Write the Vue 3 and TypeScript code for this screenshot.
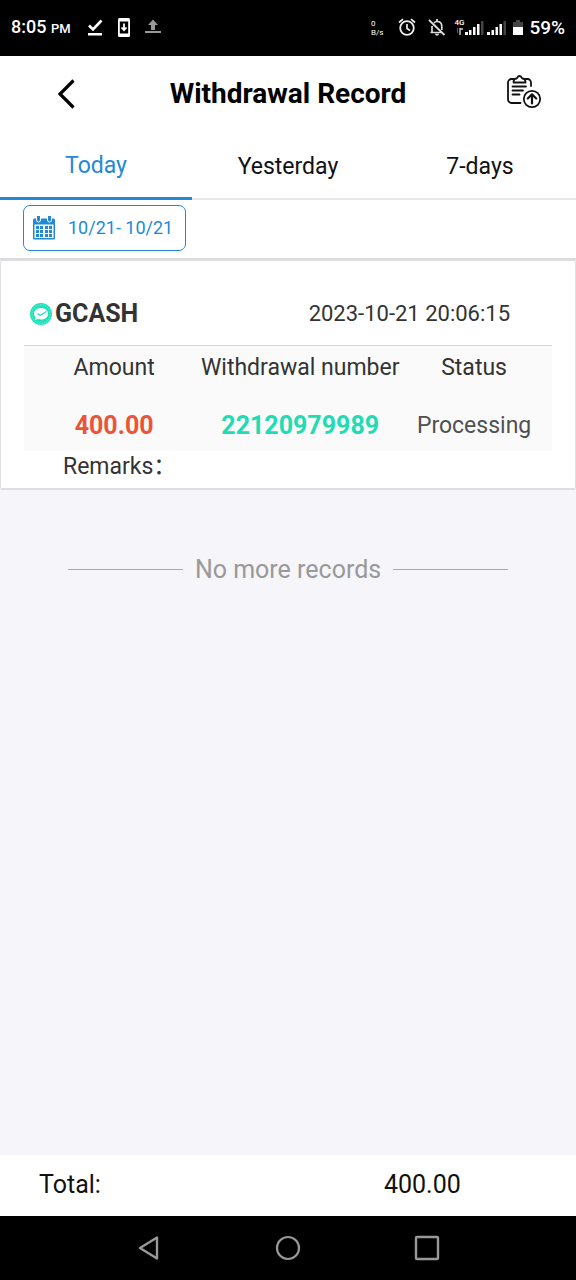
<script setup lang="ts">
import { ref } from 'vue'

interface WithdrawalRecord {
  channel: string
  time: string
  amount: string
  account: string
  status: string
}

const tabs: string[] = ['Today', 'Yesterday', '7-days']
const activeTab = ref<string>('Today')

const records: WithdrawalRecord[] = [
  {
    channel: 'GCASH',
    time: '2023-10-21 20:06:15',
    amount: '400.00',
    account: '22120979989',
    status: 'Processing',
  },
]

const calendarRows: number[] = [10, 14, 18]
const calendarCols: number[] = [3, 7, 12, 16]
</script>

<template>
  <div class="screen">
    <div class="status-bar">
      <div class="status-left">
        <span class="clock">8:05 <small>PM</small></span>
        <svg class="ic-check" width="18" height="20" viewBox="0 0 18 20">
          <path d="M3 7.5l4 4 8.500-9" fill="none" stroke="#fff" stroke-width="2.600" />
          <rect x="2" y="15" width="14" height="2.500" fill="#fff" />
        </svg>
        <svg class="ic-phone" width="14" height="20" viewBox="0 0 14 20">
          <rect x="1" y="0" width="12" height="19" rx="1.500" fill="#fff" />
          <rect x="2.800" y="3.500" width="8.400" height="12" fill="#000" />
          <path d="M7 5.500v6M4.500 9.500L7 12.200 9.500 9.500" fill="none" stroke="#fff" stroke-width="1.800" />
        </svg>
        <svg class="ic-upload" width="18" height="20" viewBox="0 0 18 20">
          <path d="M9 1.500l5 5.500h-3v5H7V7H4z" fill="#999" />
          <rect x="1" y="13" width="16" height="2" fill="#999" />
        </svg>
      </div>
      <div class="status-right">
        <span class="speed"><span>0</span><span>B/s</span></span>
        <svg class="ic-alarm" width="18" height="20" viewBox="0 0 18 20">
          <circle cx="9" cy="10" r="6.800" fill="none" stroke="#eee" stroke-width="1.800" />
          <path d="M9 6v4.500l3 2M1 4.500L5 1.200M17 4.500l-4-3.300" fill="none" stroke="#eee" stroke-width="1.700" />
        </svg>
        <svg class="ic-bell" width="18" height="20" viewBox="0 0 18 20">
          <path d="M4 14.500V8M6 4.800c1-1 2-1.300 3-1.300 3 0 4.800 2 4.800 5v3.500M2.500 14.500H13" fill="none" stroke="#ddd" stroke-width="1.700" />
          <path d="M9 1v2.500M1 2l15.500 15" stroke="#ddd" stroke-width="1.800" />
          <path d="M7 15.800h4a2 2 0 0 1-4 0z" fill="#ddd" />
        </svg>
        <span class="signal">
          <span class="net">4G</span>
          <svg width="30" height="18" viewBox="0 0 30 18">
            <path d="M6 9v7M6 10h3" fill="none" stroke="#ccc" stroke-width="1.400" />
            <path d="M3.500 9v5" stroke="#555" stroke-width="1.200" />
            <path d="M11 13h3v3h-3zM15 11h2.500v5H15zM19 8h2.500v8H19zM23 5h2.500v11H23z" fill="#fff" />
            <rect x="27" y="2" width="2.500" height="14" fill="#444" />
          </svg>
        </span>
        <svg class="ic-signal" width="19" height="18" viewBox="0 0 19 18">
          <path d="M0 13h3v3H0zM4.500 11H7v5H4.500zM8.500 8H11v8H8.500zM12.500 5H15v11h-2.500z" fill="#fff" />
          <rect x="16.500" y="2" width="2.500" height="14" fill="#444" />
        </svg>
        <svg class="ic-battery" width="10" height="18" viewBox="0 0 10 18">
          <path d="M3 1h4v2h3v5H0V3h3z" fill="#444" />
          <rect y="8" width="10" height="8" fill="#fff" />
        </svg>
        <span class="percent">59%</span>
      </div>
    </div>

    <header class="header">
      <button type="button" class="icon-button" aria-label="Back">
        <svg width="20" height="32" viewBox="0 0 20 32">
          <path d="M17.500 2.500L4 16l13.500 13.500" fill="none" stroke="#000" stroke-width="3.200" />
        </svg>
      </button>
      <h1>Withdrawal Record</h1>
      <button type="button" class="icon-button" aria-label="Submit record">
        <svg width="36" height="40" viewBox="0 0 36 40" fill="none" stroke="#111" stroke-width="1.800" stroke-linecap="round" stroke-linejoin="round">
          <path d="M14.500 29H5.500A3.500 3.500 0 0 1 2 25.500V8.500A3.500 3.500 0 0 1 5.500 5H8M19 5h2.500A3.500 3.500 0 0 1 25 8.500V12" />
          <path d="M7.500 8.500c0-3 1-4 3-4 1-.2.900-2.500 3-2.500s2 2.300 3 2.500c2 0 3 1 3 4z" />
          <path d="M6.500 12.500H20M6.500 16.500H17M6.500 20.500H13.500" />
          <circle cx="26" cy="25" r="8.200" />
          <path d="M26 29.500V20.500M21.800 24.500L26 20.300l4.200 4.200" stroke-width="2.200" />
        </svg>
      </button>
    </header>

    <nav class="tabs">
      <button
        v-for="tab in tabs"
        :key="tab"
        type="button"
        :class="{ active: tab === activeTab }"
        @click="activeTab = tab"
      >
        {{ tab }}
      </button>
    </nav>

    <div class="filter">
      <button type="button" class="date-range">
        <svg width="22" height="24" viewBox="0 0 22 24">
          <path d="M0 4A1.500 1.500 0 0 1 1.500 2.500h19A1.500 1.500 0 0 1 22 4V22a1.500 1.500 0 0 1-1.500 1.500h-19A1.500 1.500 0 0 1 0 22z" fill="#2389d7" />
          <rect x="1.500" y="8.500" width="19" height="13.500" fill="#fff" />
          <path d="M3.500 0v4a1.500 1.500 0 0 0 4 0V0M14.500 0v4a1.500 1.500 0 0 0 4 0V0" fill="#2389d7" stroke="#fff" stroke-width="1" />
          <template v-for="y in calendarRows" :key="y">
            <rect v-for="x in calendarCols" :key="x" :x="x" :y="y" width="3" height="3" fill="#2389d7" />
          </template>
        </svg>
        <span>10/21- 10/21</span>
      </button>
    </div>

    <main class="content">
      <article v-for="record in records" :key="record.account" class="card">
        <div class="card-head">
          <svg width="24" height="24" viewBox="0 0 24 24">
            <circle cx="12" cy="12" r="11" fill="#1de2ba" />
            <circle cx="12" cy="12" r="9.200" fill="none" stroke="#a5f3e2" stroke-width="1" stroke-dasharray="1 1.500" />
            <path d="M12 6c4.200 0 7 2.400 7 5.700s-2.800 5.800-7 5.800c-1 0-2-.2-2.900-.500L6 18l.8-2.500C5.700 14.400 5 13 5 11.700C5 8.400 7.800 6 12 6z" fill="#fff" />
            <path d="M8.500 11.500l2.500 2 6.500-4" fill="none" stroke="#1de2ba" stroke-width="1.200" />
          </svg>
          <strong>{{ record.channel }}</strong>
          <time>{{ record.time }}</time>
        </div>
        <table>
          <thead>
            <tr>
              <th class="col-amount">Amount</th>
              <th class="col-number">Withdrawal number</th>
              <th class="col-status">Status</th>
            </tr>
          </thead>
          <tbody>
            <tr>
              <td class="col-amount amount">{{ record.amount }}</td>
              <td class="col-number number">{{ record.account }}</td>
              <td class="col-status status">{{ record.status }}</td>
            </tr>
          </tbody>
        </table>
        <p class="remarks">Remarks：</p>
      </article>

      <p class="end">No more records</p>
    </main>

    <footer class="total">
      <span>Total:</span>
      <span>400.00</span>
    </footer>

    <div class="nav-bar">
      <button type="button" aria-label="Back">
        <svg width="24" height="28" viewBox="0 0 24 28">
          <path d="M20 3.500v21L3 14z" fill="none" stroke="#999" stroke-width="2.400" stroke-linejoin="round" />
        </svg>
      </button>
      <button type="button" aria-label="Home">
        <svg width="28" height="28" viewBox="0 0 28 28">
          <circle cx="14" cy="14" r="11" fill="none" stroke="#999" stroke-width="2.200" />
        </svg>
      </button>
      <button type="button" aria-label="Recent apps">
        <svg width="28" height="28" viewBox="0 0 28 28">
          <rect x="3" y="3" width="22" height="22" rx="1" fill="none" stroke="#999" stroke-width="2.400" />
        </svg>
      </button>
    </div>
  </div>
</template>

<style>
body {
  margin: 0;
}
</style>

<style scoped>
.screen {
  display: flex;
  flex-direction: column;
  min-height: 100vh;
  background: #f5f5fa;
  color: #333;
  font-family: Roboto, "Noto Sans CJK SC", sans-serif;
  font-size: 23px;
  line-height: 32px;
}
.screen * {
  box-sizing: border-box;
}
button {
  margin: 0;
  padding: 0;
  border: 0;
  background: none;
  color: inherit;
  font: inherit;
  cursor: pointer;
}
svg {
  display: block;
  flex: none;
}
p,
h1 {
  margin: 0;
}

.status-bar {
  display: flex;
  justify-content: space-between;
  align-items: center;
  height: 56px;
  padding: 0 11px;
  background: #000;
  color: #fff;
  font-weight: 500;
}
.status-left,
.status-right {
  display: flex;
  align-items: center;
}
.clock {
  font-size: 18px;
  white-space: nowrap;
}
.clock small {
  font-size: 13px;
}
.ic-check {
  margin-left: 15px;
}
.ic-phone,
.ic-upload {
  margin-left: 13px;
}
.speed {
  display: flex;
  flex-direction: column;
  font-size: 8px;
  line-height: 9px;
  font-weight: 400;
}
.ic-alarm {
  margin-left: 15px;
}
.ic-bell {
  margin-left: 12px;
}
.signal {
  position: relative;
  margin-left: 8px;
}
.net {
  position: absolute;
  left: 0;
  top: 0;
  font-size: 8px;
  line-height: 8px;
}
.ic-signal {
  margin-left: 3px;
}
.ic-battery {
  margin: 0 6px 0 7px;
}
.percent {
  font-size: 19px;
}

.header {
  display: flex;
  justify-content: space-between;
  align-items: center;
  height: 76px;
  padding: 0 34px 0 48px;
  background: #fff;
  color: #000;
}
.icon-button {
  display: flex;
  flex: 0 0 36px;
  justify-content: center;
}
h1 {
  flex: 1;
  padding-right: 14px;
  text-align: center;
  font-size: 28px;
  font-weight: 700;
}

.tabs {
  display: flex;
  background: #fff;
  color: #111;
}
.tabs button {
  flex: 1;
  height: 68px;
  padding-top: 3px;
  border-bottom: 2px solid #e8e8e8;
}
.tabs .active {
  border-bottom: 3px solid #2389d7;
  color: #2389d7;
}

.filter {
  padding: 5px 23px 7px;
  background: #fff;
  border-bottom: 2px solid #dcdcdc;
}
.date-range {
  display: flex;
  align-items: center;
  gap: 13px;
  height: 46px;
  padding: 0 12px 0 9px;
  border: 1px solid #2389d7;
  border-radius: 7px;
  color: #2389d7;
  font-size: 18px;
}

.content {
  flex: 1;
}
.card {
  padding: 33px 23px 6px;
  background: #fff;
  border: 1px solid #dedee2;
  border-radius: 2px;
  box-shadow: 0 1px 1px #dedee2;
}
.card-head {
  display: flex;
  align-items: center;
  padding: 4px 42px 15px 5px;
}
.card-head strong {
  flex: 1;
  padding-left: 2px;
  font-size: 25px;
}
.card-head time {
  font-size: 22px;
}
table {
  width: 100%;
  border-collapse: collapse;
  table-layout: fixed;
  background: #fafafa;
  border-top: 1px solid #d5d5d5;
}
th,
td {
  padding: 0;
  text-align: center;
  font-weight: 400;
  white-space: nowrap;
}
th {
  height: 44px;
}
td {
  height: 61px;
  padding-top: 12px;
}
.col-amount {
  width: 33%;
  padding-left: 6px;
}
.col-number {
  width: 39%;
  padding-right: 2px;
}
.col-status {
  width: 28%;
  padding-right: 8px;
}
.amount,
.number {
  font-size: 25px;
  font-weight: 700;
}
.amount {
  color: #ec5338;
}
.number {
  color: #1fdcb5;
}
.status {
  color: #505050;
}
.remarks {
  padding-left: 39px;
  line-height: 31px;
}

.end {
  display: flex;
  align-items: center;
  gap: 12px;
  padding: 65px 68px;
  color: #999;
  font-size: 25px;
}
.end::before,
.end::after {
  content: "";
  flex: 1;
  height: 1px;
  background: #aaa;
}

.total {
  display: flex;
  justify-content: space-between;
  align-items: center;
  height: 61px;
  padding: 0 20% 2px 39px;
  background: #fff;
  color: #111;
  font-size: 25px;
}

.nav-bar {
  display: flex;
  justify-content: center;
  gap: 111px;
  height: 64px;
  background: #000;
}
.nav-bar button {
  display: flex;
  align-items: center;
  justify-content: center;
  width: 28px;
}
</style>
